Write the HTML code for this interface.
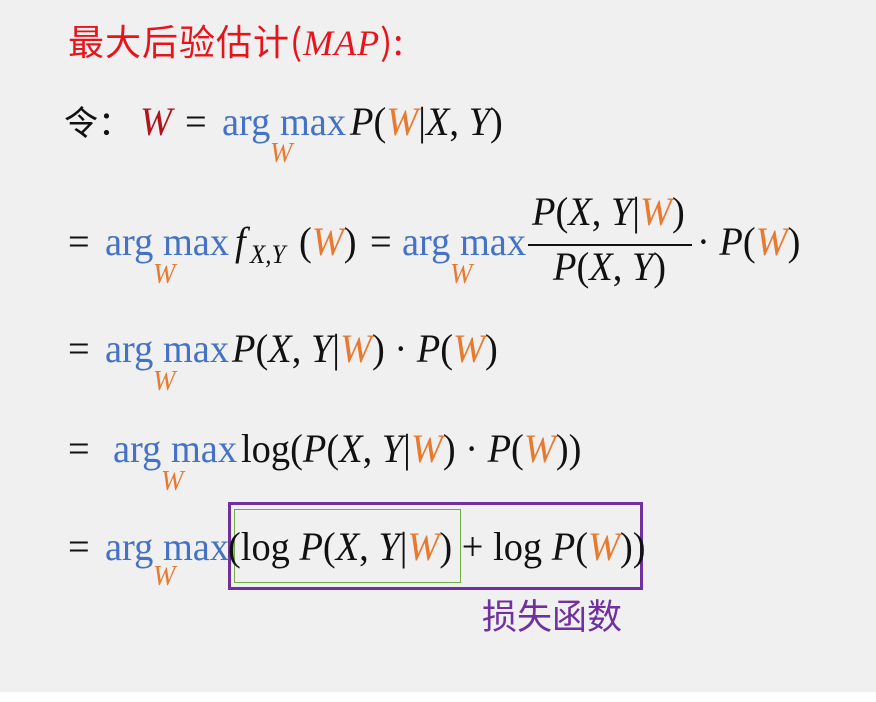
<!DOCTYPE html>
<html><head><meta charset="utf-8"><style>
html,body{margin:0;padding:0}
body{width:876px;height:702px;background:#fff;position:relative;overflow:hidden}
#bg{position:absolute;left:0;top:0;width:876px;height:692px;background:#f0f0f0}
.t{position:absolute;font-family:"Liberation Serif","Noto Serif CJK SC",serif;font-size:40px;line-height:40px;white-space:pre;color:#111;transform:scaleX(0.96);transform-origin:left top}
.i{font-style:italic}
.b{color:#4472c4}
.o{color:#e87a30;font-style:italic}
.s{font-size:28px;line-height:28px}
.cj{font-family:"Noto Sans CJK SC",sans-serif;transform:none}
</style></head><body>
<div id="bg"></div>
<!-- title -->
<div class="t cj" style="left:68px;top:19px;font-size:36px;line-height:42px;color:#e8141c;letter-spacing:1px">最大后验估计(<span style="font-family:'Liberation Serif',serif;font-style:italic">MAP</span>):</div>

<!-- line1 baseline 135 -->
<div class="t cj" style="left:64px;top:100px;font-size:34px;line-height:42px">令：</div>
<div class="t i" style="left:140px;top:102px;color:#b0141c">W</div>
<div class="t" style="left:185px;top:102px">=</div>
<div class="t b" style="left:222px;top:102px">arg max</div>
<div class="t s o" style="left:270px;top:140px">W</div>
<div class="t" style="left:350px;top:102px"><i>P</i>(<span class="o">W</span>|<i>X</i>, <i>Y</i>)</div>

<!-- line2 baseline 255 -->
<div class="t" style="left:68px;top:222px">=</div>
<div class="t b" style="left:105px;top:222px">arg max</div>
<div class="t s o" style="left:153px;top:261px">W</div>
<div class="t i" style="left:235px;top:222px">f</div>
<div class="t i" style="left:250px;top:242px;font-size:26px;line-height:26px">X,Y</div>
<div class="t" style="left:299px;top:222px">(<span class="o">W</span>)</div>
<div class="t" style="left:370px;top:222px">=</div>
<div class="t b" style="left:402px;top:222px">arg max</div>
<div class="t s o" style="left:450px;top:261px">W</div>
<div class="t" style="left:532px;top:192px"><i>P</i>(<i>X</i>, <i>Y</i>|<span class="o">W</span>)</div>
<div style="position:absolute;left:528px;top:244px;width:164px;height:2px;background:#111"></div>
<div class="t" style="left:553px;top:247px"><i>P</i>(<i>X</i>, <i>Y</i>)</div>
<div class="t" style="left:697px;top:222px">· <i>P</i>(<span class="o">W</span>)</div>

<!-- line3 baseline 362 -->
<div class="t" style="left:68px;top:329px">=</div>
<div class="t b" style="left:105px;top:329px">arg max</div>
<div class="t s o" style="left:153px;top:368px">W</div>
<div class="t" style="left:232px;top:329px"><i>P</i>(<i>X</i>, <i>Y</i>|<span class="o">W</span>) · <i>P</i>(<span class="o">W</span>)</div>

<!-- line4 baseline 462 -->
<div class="t" style="left:68px;top:429px">=</div>
<div class="t b" style="left:113px;top:429px">arg max</div>
<div class="t s o" style="left:161px;top:468px">W</div>
<div class="t" style="left:241px;top:429px">log(<i>P</i>(<i>X</i>, <i>Y</i>|<span class="o">W</span>) · <i>P</i>(<span class="o">W</span>))</div>

<!-- line5 baseline 560 -->
<div style="position:absolute;left:228px;top:502px;width:409px;height:82px;border:3px solid #7030a0"></div>
<div style="position:absolute;left:234px;top:509px;width:225px;height:72px;border:1.5px solid #70ad47"></div>
<div class="t" style="left:68px;top:527px">=</div>
<div class="t b" style="left:105px;top:527px">arg max</div>
<div class="t s o" style="left:153px;top:563px">W</div>
<div class="t" style="left:228px;top:527px">(log <i>P</i>(<i>X</i>, <i>Y</i>|<span class="o">W</span>) + log <i>P</i>(<span class="o">W</span>))</div>
<div class="t cj" style="left:482px;top:594px;font-size:35px;line-height:42px;color:#7030a0">损失函数</div>
</body></html>
